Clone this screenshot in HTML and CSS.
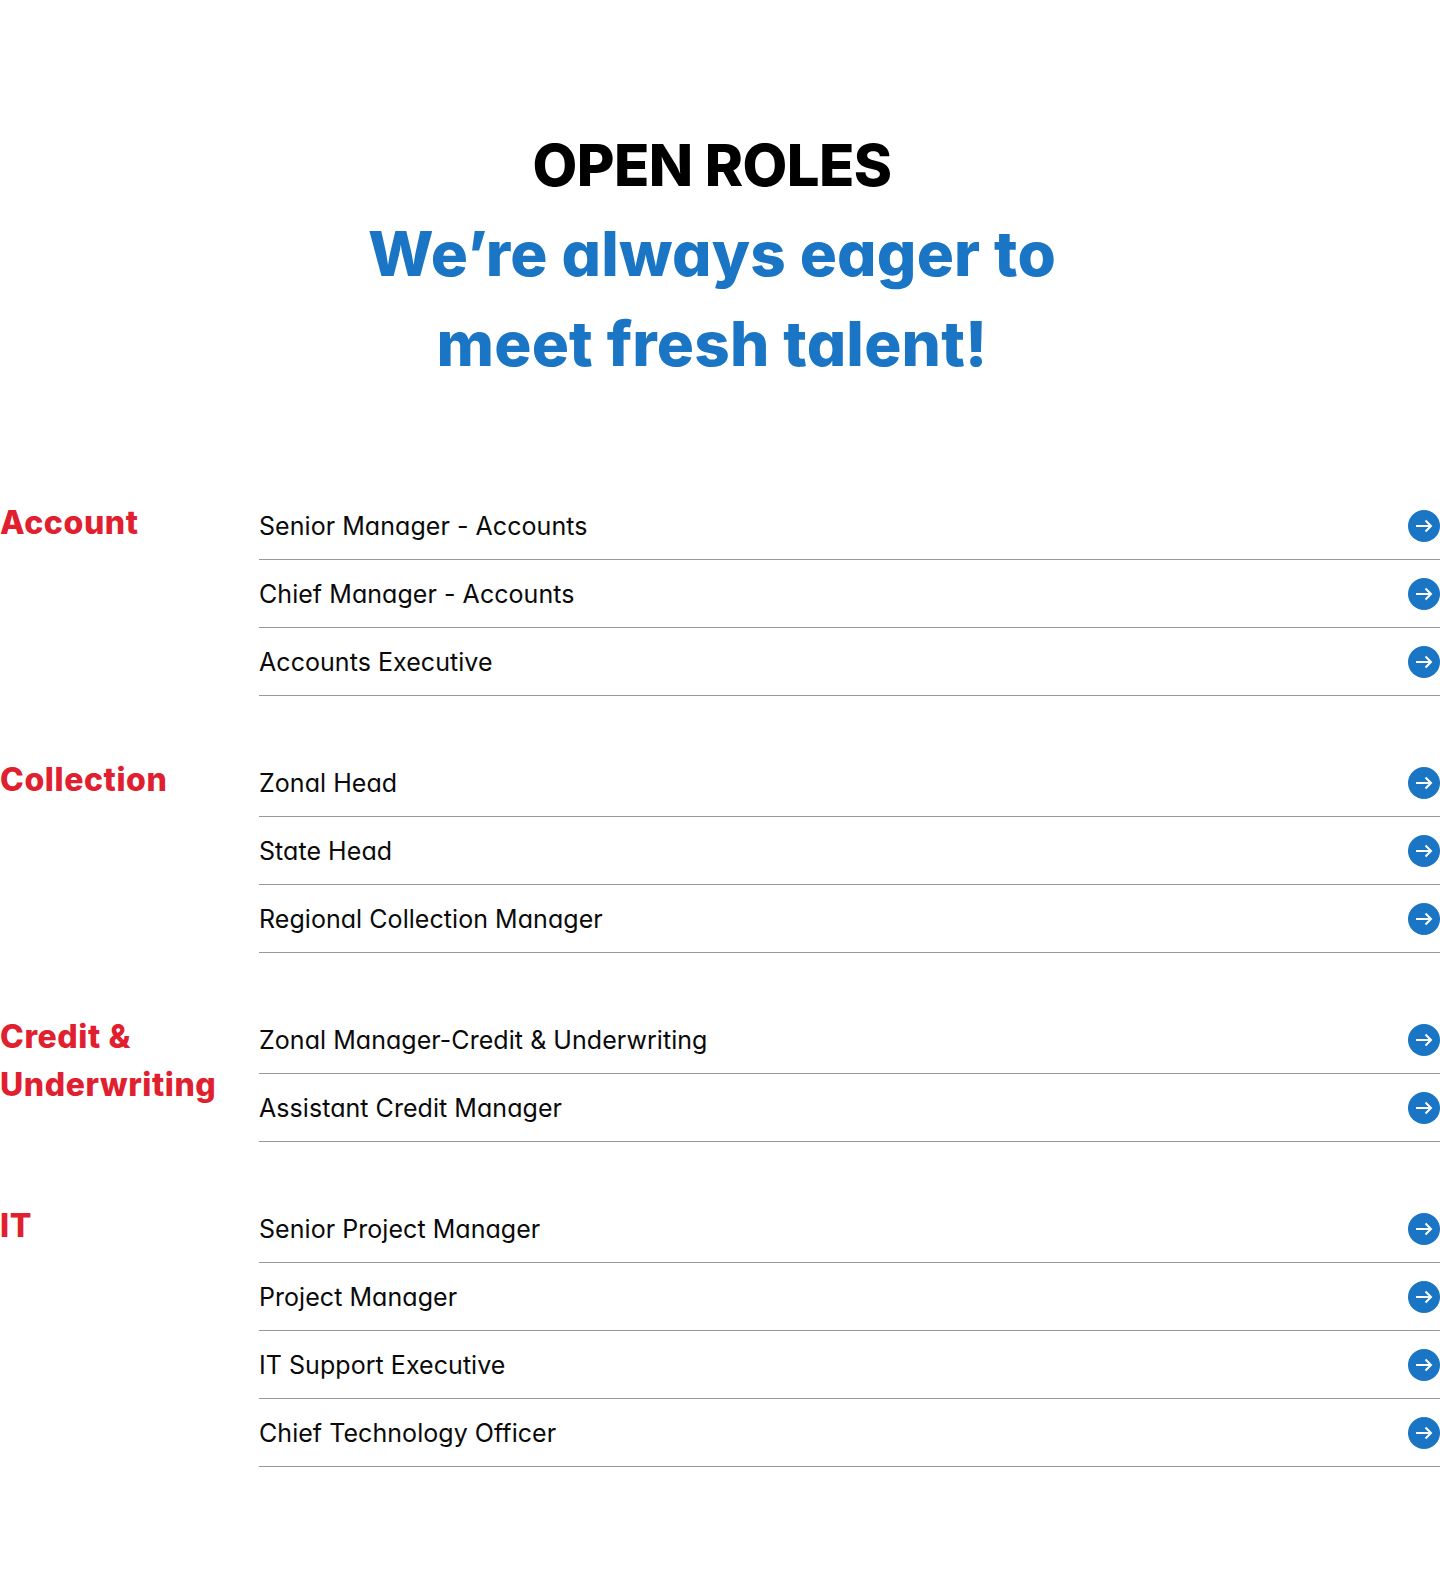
FILE: index.html
```html
<!DOCTYPE html>
<html lang="en">

<head>
    <meta charset="UTF-8">
    <meta name="viewport" content="width=device-width, initial-scale=1.0">
    <title>Open Roles</title>
    <link rel="stylesheet" href="styles.css">
</head>

<body>
    <svg class="defs" width="0" height="0">
        <symbol id="arrow" viewBox="0 0 32 32">
            <circle cx="16" cy="16" r="16" fill="#1a75c4"></circle>
            <path d="M8 16h15M17.5 10.5 23 16l-5.500 5.500" fill="none" stroke="#fff" stroke-width="2"></path>
        </symbol>
    </svg>

    <div class="heading">
        <h2>OPEN ROLES</h2>
        <h1>We’re always eager to<br>meet fresh talent!</h1>
    </div>

    <div class="groups">
        <div class="group">
            <h3>Account</h3>
            <ul>
                <li>Senior Manager - Accounts <svg class="go"><use href="#arrow"></use></svg></li>
                <li>Chief Manager - Accounts <svg class="go"><use href="#arrow"></use></svg></li>
                <li>Accounts Executive <svg class="go"><use href="#arrow"></use></svg></li>
            </ul>
        </div>

        <div class="group">
            <h3>Collection</h3>
            <ul>
                <li>Zonal Head <svg class="go"><use href="#arrow"></use></svg></li>
                <li>State Head <svg class="go"><use href="#arrow"></use></svg></li>
                <li>Regional Collection Manager <svg class="go"><use href="#arrow"></use></svg></li>
            </ul>
        </div>

        <div class="group">
            <h3>Credit &amp; Underwriting</h3>
            <ul>
                <li>Zonal Manager-Credit &amp; Underwriting <svg class="go"><use href="#arrow"></use></svg></li>
                <li>Assistant Credit Manager <svg class="go"><use href="#arrow"></use></svg></li>
            </ul>
        </div>

        <div class="group">
            <h3>IT</h3>
            <ul>
                <li>Senior Project Manager <svg class="go"><use href="#arrow"></use></svg></li>
                <li>Project Manager <svg class="go"><use href="#arrow"></use></svg></li>
                <li>IT Support Executive <svg class="go"><use href="#arrow"></use></svg></li>
                <li>Chief Technology Officer <svg class="go"><use href="#arrow"></use></svg></li>
            </ul>
        </div>
    </div>
</body>

</html>
```

FILE: styles.css
```css
* {
    margin: 0;
    padding: 0;
    box-sizing: border-box;
}

body {
    background-color: #fff;
    font-family: Inter, "Noto Sans", sans-serif;
    font-feature-settings: "cv11";
    height: 1587px;
    overflow: hidden;
}

.defs {
    display: block;
    height: 0;
}

.heading {
    padding: 120px 16px 0 0;
    text-align: center;
}

.heading h2 {
    color: #000;
    font-size: 58px;
    font-weight: 800;
    line-height: 90px;
    letter-spacing: -0.6px;
}

.heading h1 {
    color: #1a75c4;
    font-size: 62px;
    font-weight: 800;
    line-height: 90px;
    letter-spacing: 0.2px;
    margin-top: -1px;
}

.groups {
    margin-top: 103px;
    display: flex;
    flex-direction: column;
    gap: 53px;
}

.group {
    display: flex;
}

.group h3 {
    width: 259px;
    flex-shrink: 0;
    padding: 7px 30px 0 0;
    color: #e0202e;
    font-size: 32px;
    font-weight: 800;
    line-height: 48px;
    letter-spacing: 0.6px;
}

.group ul {
    flex: 1;
    list-style: none;
}

.group li {
    height: 68px;
    display: flex;
    align-items: center;
    justify-content: space-between;
    border-bottom: 1px solid #999;
    color: #0a0a0a;
    font-size: 25px;
    font-weight: 400;
    letter-spacing: 0.05px;
}

.go {
    width: 32px;
    height: 32px;
}
```
